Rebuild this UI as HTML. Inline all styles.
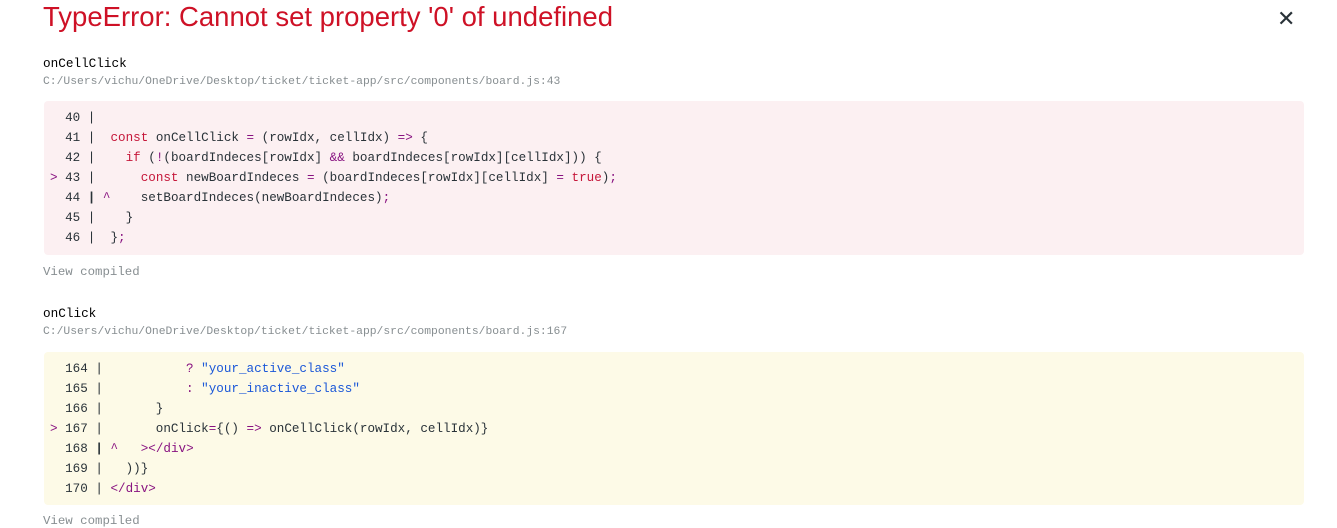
<!DOCTYPE html>
<html><head><meta charset="utf-8"><style>
body{margin:0;background:#fff;width:1337px;height:518px;overflow:hidden;font-family:"Liberation Sans",sans-serif;position:relative}
h1{position:absolute;left:43px;top:0px;margin:0;font-weight:normal;font-size:27.5px;line-height:34px;color:#ce1126;white-space:nowrap}
.x{position:absolute;left:1277px;top:6px;font-size:22px;color:#293238}
.m{font-family:"Liberation Mono",monospace;position:absolute;left:43px;white-space:pre}
.fn{font-size:12.7px;color:#000}
.p{font-size:11.35px;color:#878e91}
.vc{font-size:12.4px;color:#878e91}
.code{position:absolute;left:44px;width:1260px;border-radius:4px;box-sizing:border-box;padding:7px 6px;font-family:"Liberation Mono",monospace;font-size:12.6px;line-height:20px;white-space:pre;color:#293238}
.r{background:#fcf0f2}.y{background:#fdfae7}
.k{color:#c5173a}.o{color:#881280}.s{color:#1a57d8}
</style></head><body>
<h1>TypeError: Cannot set property '0' of undefined</h1>
<div class="x">✕</div>
<div class="m fn" style="top:56px">onCellClick</div>
<div class="m p" style="top:76px">C:/Users/vichu/OneDrive/Desktop/ticket/ticket-app/src/components/board.js:43</div>
<div class="code r" style="top:101px;height:154px">  40 |
  41 |  <span class="k">const</span> onCellClick <span class="o">=</span> (rowIdx, cellIdx) <span class="o">=&gt;</span> {
  42 |    <span class="k">if</span> (<span class="o">!</span>(boardIndeces[rowIdx] <span class="o">&amp;&amp;</span> boardIndeces[rowIdx][cellIdx])) {
<span class="o">&gt;</span> 43 |      <span class="k">const</span> newBoardIndeces <span class="o">=</span> (boardIndeces[rowIdx][cellIdx] <span class="o">=</span> <span class="k">true</span>)<span class="o">;</span>
  44 <b>|</b> <span class="o">^</span>    setBoardIndeces(newBoardIndeces)<span class="o">;</span>
  45 |    }
  46 |  }<span class="o">;</span></div>
<div class="m vc" style="top:265px">View compiled</div>
<div class="m fn" style="top:306px">onClick</div>
<div class="m p" style="top:326px">C:/Users/vichu/OneDrive/Desktop/ticket/ticket-app/src/components/board.js:167</div>
<div class="code y" style="top:352px;height:153px">  164 |           <span class="o">?</span> <span class="s">"your_active_class"</span>
  165 |           <span class="o">:</span> <span class="s">"your_inactive_class"</span>
  166 |       }
<span class="o">&gt;</span> 167 |       onClick<span class="o">=</span>{() <span class="o">=&gt;</span> onCellClick(rowIdx, cellIdx)}
  168 <b>|</b> <span class="o">^</span>   <span class="o">&gt;&lt;/div&gt;</span>
  169 |   ))}
  170 | <span class="o">&lt;/div&gt;</span></div>
<div class="m vc" style="top:514px">View compiled</div>
</body></html>
